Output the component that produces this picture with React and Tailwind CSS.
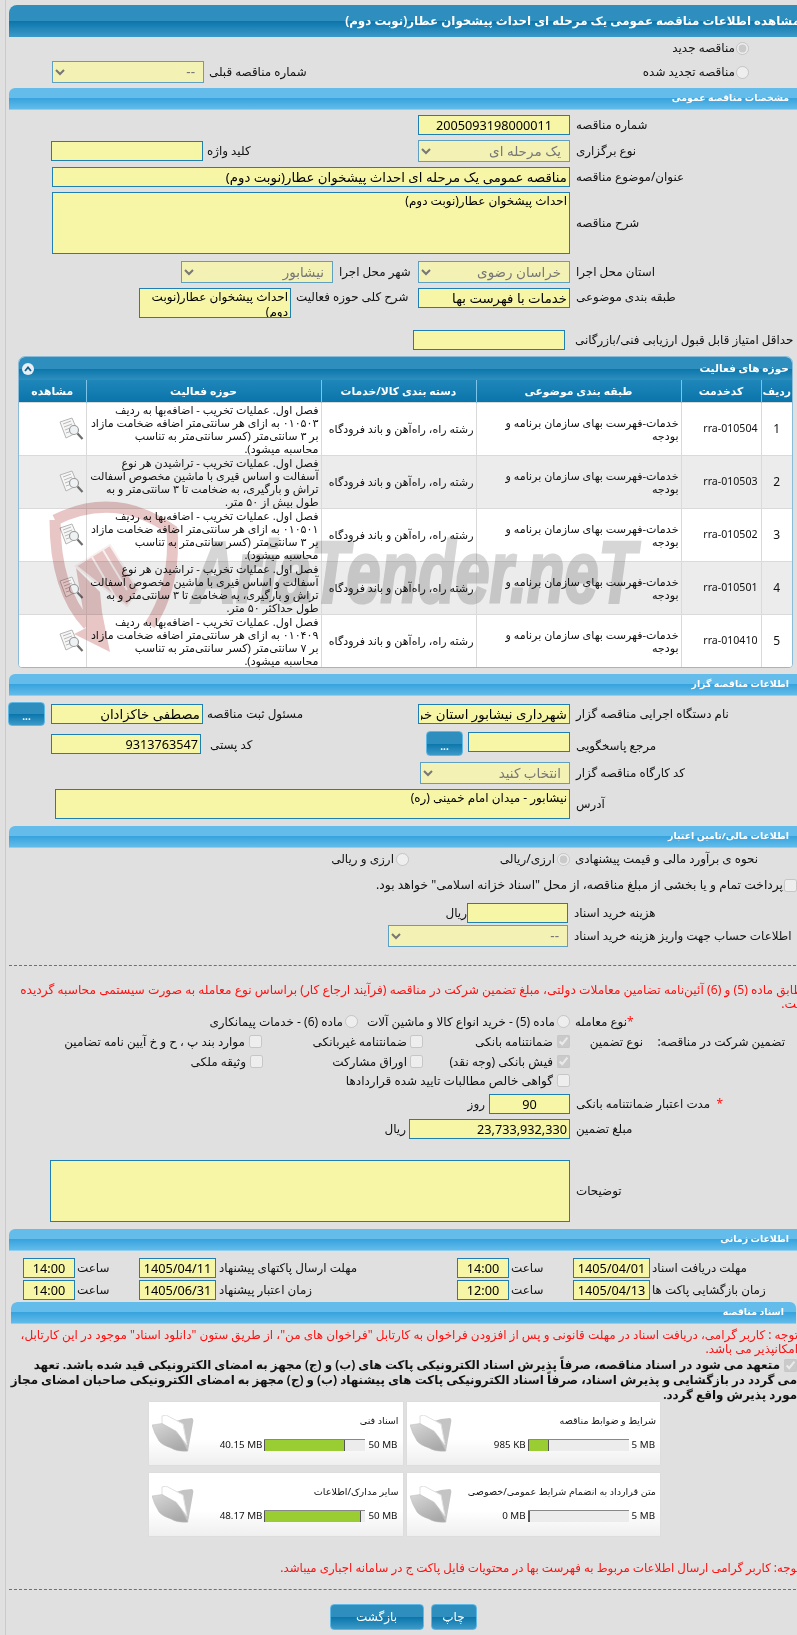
import React from 'react';

const font = "[font-family:'Noto_Sans','DejaVu_Sans',sans-serif]";
const inputCls = 'block h-[20px] border border-[#1f7fb3] bg-[#f7f6a6] px-0.5 text-black outline-none';
const areaCls = 'block resize-none overflow-hidden border border-[#1f7fb3] bg-[#f7f6a6] px-0.5 text-[12px] leading-[15px] text-black outline-none';
const selectCls = 'block h-[22px] border border-[#5f9fbf] bg-[#f3f1b4] px-1 text-[13.5px] text-[#777]';
const darkGrad = 'bg-[linear-gradient(#2e8fbe_0%,#2e8fbe_50%,#0a75ab_50%,#3d9ac8_100%)]';

const Sub = ({ title }) => (
  <div className="flex h-[22px] items-center rounded-tl-[6px] border-b border-[#8fd0f0] bg-[linear-gradient(#63bcea_0%,#63bcea_48%,#38a3dd_50%,#63bcea_100%)] pr-[12px] text-[9.4px] font-bold text-white">
    {title}
  </div>
);

const Label = ({ w, pl = 'pl-[6px]', children }) => (
  <div className={`${w} ${pl} shrink-0 text-left text-[11.9px] whitespace-nowrap`}>{children}</div>
);

const Row = ({ cls, children }) => <div className={`flex items-center ${cls}`}>{children}</div>;

const Dots = ({ cls }) => (
  <button className={`flex shrink-0 items-end justify-center rounded-[4px] border border-[#5fb8e6] pb-1 text-[10px] leading-none font-bold text-white ${darkGrad} ${cls}`}>
    ...
  </button>
);

const Radio = ({ checked }) => (
  <input type="radio" disabled defaultChecked={checked} className="m-0 block h-[13px] w-[13px] shrink-0" />
);
const Check = ({ checked }) => (
  <input type="checkbox" disabled defaultChecked={checked} className="m-0 block h-[13px] w-[13px] shrink-0" />
);

const DocIcon = () => (
  <svg width="25" height="24" viewBox="0 0 25 24" className="block">
    <path d="M1 5 L13 1 L19 15 L7 21 Z" fill="#f6f6f6" stroke="#b5b5b5" />
    <path d="M4 7 L12 4 M5 10 L13 7 M6 13 L11 11 M7 16 L10 15" stroke="#b8b8b8" />
    <circle cx="15" cy="13" r="4.5" fill="#eef2f4" stroke="#9a9a9a" strokeWidth="1.2" />
    <path d="M18.5 16.5 L23.5 22" stroke="#6d6d6d" strokeWidth="2.2" />
  </svg>
);

const Folder = () => (
  <svg width="42" height="38" viewBox="0 0 42 38" className="block shrink-0">
    <defs>
      <linearGradient id="flap" x1="0" y1="0" x2="0.6" y2="1">
        <stop offset="0" stopColor="#d8d8d8" />
        <stop offset="1" stopColor="#a9a9a9" />
      </linearGradient>
    </defs>
    <path d="M24 6 L31 4 L40 3 Q42 4 41 8 L36 36 L26 20 Z" fill="#c4c4c4" />
    <path d="M10 1 L14 0 L31 9 L35 30 L24 16 L10 9 Z" fill="#ffffff" stroke="#e0e0e0" />
    <path d="M0 10 L10 8.5 L24 16.5 L29 23 L36 36 Q26 37 19 33 Q10 30 7 26 Q2 18 0 10 Z" fill="url(#flap)" stroke="#bbbbbb" strokeWidth="0.5" />
  </svg>
);

const Card = ({ title, used, max, pct }) => (
  <div className="flex h-[63px] bg-[linear-gradient(#ffffff_0%,#ffffff_60%,#efefef_100%)] shadow-[0_0_1px_#cfcfcf]">
    <div className="min-w-0 flex-1 pt-[12px] pr-[4px]">
      <div className="h-[13px] text-[9.6px] leading-[13px] whitespace-nowrap">{title}</div>
      <div className="mt-[12px] flex items-center pr-px text-[9.8px] leading-[12px]">
        <span className="whitespace-nowrap" dir="ltr">{max}</span>
        <div className="mr-[3px] h-[12px] w-[101px] shrink-0 border-t border-[#888] bg-[#ececec]" dir="ltr">
          <div className="h-full border-r border-l border-[#555] bg-[#9acd32]" style={{ width: `${pct}%` }} />
        </div>
        <span className="mr-[2px] whitespace-nowrap" dir="ltr">{used}</span>
      </div>
    </div>
    <div className="pt-[13px] pl-[3px]"><Folder /></div>
  </div>
);

const addLines = (code, last) => `فصل اول. عملیات تخریب - اضافه‌بها به ردیف\n${code} به ازای هر سانتی‌متر اضافه ضخامت مازاد\nبر ${last} سانتی‌متر (کسر سانتی‌متر به تناسب\nمحاسبه میشود).`;
const cutLines = (tail) => `فصل اول. عملیات تخریب - تراشیدن هر نوع\nآسفالت و اساس قیری با ماشین مخصوص آسفالت\nتراش و بارگیری، به ضخامت تا ۳ سانتی‌متر و به\n${tail}`;

const activity = [
  ['1', 'rra-010504', addLines('۰۱۰۵۰۳', '۳')],
  ['2', 'rra-010503', cutLines('طول بیش از ۵۰ متر.')],
  ['3', 'rra-010502', addLines('۰۱۰۵۰۱', '۳')],
  ['4', 'rra-010501', cutLines('طول حداکثر ۵۰ متر.')],
  ['5', 'rra-010410', addLines('۰۱۰۴۰۹', '۷')],
];

const ActivityPanel = () => (
  <div className="mt-[6px] mr-[8px] ml-[9px] overflow-hidden rounded-t-[7px] rounded-b-[4px] border border-[#8bbbd6] bg-white">
    <div className="flex h-[23px] items-center justify-between bg-[linear-gradient(#2e8fbe_0%,#2e8fbe_50%,#0a75ab_50%,#2e8fbe_100%)] pr-[3px] pl-[3px] text-[10.6px] font-bold text-white">
      <span>حوزه های فعالیت</span>
      <span className="flex h-[12px] w-[12px] items-center justify-center rounded-full bg-[#e8eef4]">
        <svg width="8" height="6" viewBox="0 0 8 6"><path d="M1 5 L4 1.5 L7 5" fill="none" stroke="#14608c" strokeWidth="1.8" /></svg>
      </span>
    </div>
    <table className="w-full table-fixed border-collapse text-[11.1px] leading-[13px]">
      <thead>
        <tr className="h-[22px] bg-[linear-gradient(#1f86b9_0%,#0a75ab_100%)] text-[10.8px] font-bold text-white">
          <th className="w-[31px] border-l border-[#7cc4e8] font-bold">ردیف</th>
          <th className="w-[80px] border-l border-[#7cc4e8] font-bold">کدخدمت</th>
          <th className="w-[205px] border-l border-[#7cc4e8] font-bold">طبقه بندی موضوعی</th>
          <th className="w-[155px] border-l border-[#7cc4e8] font-bold">دسته بندی کالا/خدمات</th>
          <th className="w-[235px] border-l border-[#7cc4e8] font-bold">حوزه فعالیت</th>
          <th className="font-bold">مشاهده</th>
        </tr>
      </thead>
      <tbody>
        {activity.map((r, i) => (
          <tr key={r[0]} className={`h-[53px] border-t border-[#dadada] ${i % 2 ? 'bg-[#ececec]' : 'bg-white'}`}>
            <td className="border-l border-[#dadada] text-center text-[12px]">{r[0]}</td>
            <td className="border-l border-[#dadada] px-[3px] text-right text-[10.6px]" dir="ltr">{r[1]}</td>
            <td className="border-l border-[#dadada] px-[2px]">خدمات-فهرست بهای سازمان برنامه و بودجه</td>
            <td className="border-l border-[#dadada] px-[2px] whitespace-nowrap">رشته راه، راه‌آهن و باند فرودگاه</td>
            <td className="border-l border-[#dadada] px-[2px] whitespace-pre-line">{r[2]}</td>
            <td className="pr-[2px]"><DocIcon /></td>
          </tr>
        ))}
      </tbody>
    </table>
  </div>
);

const Watermark = () => (
  <svg width="797" height="1635" viewBox="0 0 797 1635" dir="ltr" className="pointer-events-none absolute top-0 left-0 mix-blend-multiply">
    <path d="M55 520 Q115 490 172 530 Q176 585 150 625" fill="none" stroke="#e8c6c6" strokeWidth="11" />
    <path d="M55 520 Q55 590 88 625" fill="none" stroke="#e8c6c6" strokeWidth="11" />
    <path d="M76 566 L110 545 L138 590 L127 606 Z M92 557 L116 598 M103 550 L127 590" fill="#e8c6c6" stroke="#f8f0f0" strokeWidth="2" />
    <path d="M102 612 L110 652 L74 634 L86 628 L76 568 L100 592 Z" fill="#e8c6c6" />
    <text x="192" y="602" textLength="444" lengthAdjust="spacingAndGlyphs" fill="#d6d6d6" stroke="#d6d6d6" strokeWidth="3" fontSize="88" fontWeight="700" fontFamily="'Liberation Sans', sans-serif" fontStyle="italic">AriaTender.neT</text>
  </svg>
);

export default function App() {
  return (
    <div className={`relative h-[1635px] w-[797px] overflow-hidden bg-[#e0e0e0] text-[#111] ${font}`} dir="ltr">
      <div className="ml-[5px] h-full w-[796px] border-l border-[#cacaca] pt-[5px] pl-[3px]" dir="rtl">
        <div className={`flex h-[32px] items-center rounded-tl-[8px] text-[11.85px] font-bold whitespace-nowrap text-white ${darkGrad}`}>
          <span className="mr-px">مشاهده اطلاعات مناقصه عمومی یک مرحله ای احداث پیشخوان عطار(نوبت دوم)</span>
        </div>

        <Row cls="mt-[3px] h-[16px] pr-[52px] text-[12px]">
          <Radio checked />
          <span className="mr-[1px]">مناقصه جدید</span>
        </Row>
        <Row cls="mt-[5px] h-[22px]">
          <div className="flex w-[439px] items-center pr-[52px] text-[12px]">
            <Radio />
            <span className="mr-[1px]">مناقصه تجدید شده</span>
          </div>
          <Label w="w-[158px]" pl="pl-[5px]">شماره مناقصه قبلی</Label>
          <select defaultValue="--" className={`${selectCls} w-[152px] text-[#222]`}><option>--</option></select>
        </Row>

        <div className="mt-[5px]"><Sub title="مشخصات مناقصه عمومی" /></div>

        <Row cls="mt-[5px] h-[20px]">
          <Label w="w-[231px]">شماره مناقصه</Label>
          <input readOnly defaultValue="2005093198000011" className={`${inputCls} w-[152px] text-center text-[12.7px]`} />
        </Row>
        <Row cls="mt-[5px] h-[22px]">
          <Label w="w-[231px]">نوع برگزاری</Label>
          <select defaultValue="a" className={`${selectCls} w-[152px]`}><option value="a">یک مرحله ای</option></select>
          <Label w="w-[215px]" pl="pl-[4px]">کلید واژه</Label>
          <input readOnly className={`${inputCls} w-[152px]`} />
        </Row>
        <Row cls="mt-[5px] h-[20px]">
          <Label w="w-[231px]">عنوان/موضوع مناقصه</Label>
          <input readOnly defaultValue="مناقصه عمومی یک مرحله ای احداث پیشخوان عطار(نوبت دوم)" className={`${inputCls} w-[518px] text-[13.3px]`} />
        </Row>
        <Row cls="mt-[5px] h-[62px]">
          <Label w="w-[231px]">شرح مناقصه</Label>
          <textarea readOnly defaultValue="احداث پیشخوان عطار(نوبت دوم)" className={`${areaCls} h-[62px] w-[518px]`} />
        </Row>
        <Row cls="mt-[7px] h-[22px]">
          <Label w="w-[231px]">استان محل اجرا</Label>
          <select defaultValue="a" className={`${selectCls} w-[152px]`}><option value="a">خراسان رضوی</option></select>
          <Label w="w-[85px]">شهر محل اجرا</Label>
          <select defaultValue="a" className={`${selectCls} w-[152px]`}><option value="a">نیشابور</option></select>
        </Row>
        <div className="mt-[5px] flex h-[30px] items-start">
          <Label w="w-[231px]">طبقه بندی موضوعی</Label>
          <input readOnly defaultValue="خدمات با فهرست بها" className={`${inputCls} w-[152px] text-[13.3px]`} />
          <Label w="w-[127px]" pl="pl-[5px]">شرح کلی حوزه فعالیت</Label>
          <textarea readOnly defaultValue="احداث پیشخوان عطار(نوبت دوم)" className={`${areaCls} h-[30px] w-[152px]`} />
        </div>
        <Row cls="mt-[12px] h-[20px]">
          <Label w="w-[236px]" pl="pl-[10px]">حداقل امتیاز قابل قبول ارزیابی فنی/بازرگانی</Label>
          <input readOnly className={`${inputCls} w-[152px]`} />
        </Row>

        <ActivityPanel />

        <div className="mt-[6px]"><Sub title="اطلاعات مناقصه گزار" /></div>

        <Row cls="mt-[8px] h-[20px]">
          <Label w="w-[231px]">نام دستگاه اجرایی مناقصه گزار</Label>
          <input readOnly defaultValue="شهرداری نیشابور استان خراسان رضوی" className={`${inputCls} w-[152px] text-[13.3px]`} />
          <Label w="w-[215px]" pl="pl-[4px]">مسئول ثبت مناقصه</Label>
          <input readOnly defaultValue="مصطفی خاکزادان" className={`${inputCls} w-[152px] text-[13.3px]`} />
          <Dots cls="mr-[6px] h-[24px] w-[37px]" />
        </Row>
        <div className="mt-[8px] flex h-[22px] items-start">
          <Label w="w-[231px]" pl="pl-[6px] mt-[5px]">مرجع پاسخگویی</Label>
          <input readOnly className={`${inputCls} w-[102px]`} />
          <Dots cls="mr-[5px] -mt-[1px] h-[25px] w-[37px]" />
          <Label w="w-[225px]" pl="pl-[9px] mt-[4px]">کد پستی</Label>
          <input readOnly defaultValue="9313763547" className={`${inputCls} mt-[2px] w-[150px] text-[12.7px]`} />
        </div>
        <Row cls="mt-[8px] h-[22px]">
          <Label w="w-[231px]">کد کارگاه مناقصه گزار</Label>
          <select defaultValue="a" className={`${selectCls} w-[150px]`}><option value="a">انتخاب کنید</option></select>
        </Row>
        <Row cls="mt-[5px] h-[30px]">
          <Label w="w-[231px]">آدرس</Label>
          <textarea readOnly defaultValue="نیشابور - میدان امام خمینی (ره)" className={`${areaCls} h-[30px] w-[515px]`} />
        </Row>

        <div className="mt-[7px]"><Sub title="اطلاعات مالی/تامین اعتبار" /></div>

        <Row cls="mt-[3px] h-[16px] text-[12px]">
          <Label w="w-[231px]" pl="pl-[5px]">نحوه ی برآورد مالی و قیمت پیشنهادی</Label>
          <Radio checked />
          <span className="mr-[2px] w-[146px]">ارزی/ریالی</span>
          <Radio />
          <span className="mr-[2px]">ارزی و ریالی</span>
        </Row>
        <Row cls="mt-[10px] h-[16px] pr-[4px] text-[12.3px]">
          <Check />
          <span className="mr-[1px] whitespace-nowrap">پرداخت تمام و یا بخشی از مبلغ مناقصه، از محل "اسناد خزانه اسلامی" خواهد بود.</span>
        </Row>
        <Row cls="mt-[10px] h-[20px]">
          <Label w="w-[233px]">هزینه خرید اسناد</Label>
          <input readOnly className={`${inputCls} w-[101px]`} />
          <span className="text-[12px]">ریال</span>
        </Row>
        <Row cls="mt-[2px] h-[22px]">
          <Label w="w-[233px]">اطلاعات حساب جهت واریز هزینه خرید اسناد</Label>
          <select defaultValue="--" className={`${selectCls} w-[180px] text-[#222]`}><option>--</option></select>
        </Row>

        <div className="mt-[18px] h-px border-t border-dashed border-[#2a86b8]" />

        <div className="mt-[17px] -mr-[9px] ml-[9px] text-[12.2px] leading-[14.3px] text-[#ff1010]">
          مطابق ماده (5) و (6) آئین‌نامه تضامین معاملات دولتی، مبلغ تضمین شرکت در مناقصه (فرآیند ارجاع کار) براساس نوع معامله به صورت سیستمی محاسبه گردیده است.
        </div>

        <Row cls="mt-[2px] h-[16px] text-[12px] whitespace-nowrap">
          <Label w="w-[231px]" pl="pl-[5px]"><span className="text-[#ff1010]">*</span>نوع معامله</Label>
          <Radio />
          <span className="mr-[2px] w-[197px]">ماده (5) - خرید انواع کالا و ماشین آلات</span>
          <Radio />
          <span className="mr-[2px]">ماده (6) - خدمات پیمانکاری</span>
        </Row>
        <Row cls="mt-[4px] h-[16px] text-[12px] whitespace-nowrap">
          <div className="flex w-[231px] shrink-0 pr-[16px]">
            <span className="w-[142px]">تضمین شرکت در مناقصه:</span>
            <span>نوع تضمین</span>
          </div>
          <Check checked />
          <span className="mr-[4px] w-[130px]">ضمانتنامه بانکی</span>
          <Check />
          <span className="mr-[3px] w-[145px]">ضمانتنامه غیربانکی</span>
          <Check />
          <span className="mr-[4px]">موارد بند پ ، ح و خ آیین نامه تضامین</span>
        </Row>
        <Row cls="mt-[4px] h-[16px] text-[12px] whitespace-nowrap">
          <div className="w-[231px] shrink-0" />
          <Check checked />
          <span className="mr-[4px] w-[130px]">فیش بانکی (وجه نقد)</span>
          <Check />
          <span className="mr-[3px] w-[144px]">اوراق مشارکت</span>
          <Check />
          <span className="mr-[4px]">وثیقه ملکی</span>
        </Row>
        <Row cls="mt-[3px] h-[16px] text-[12px] whitespace-nowrap">
          <div className="w-[231px] shrink-0" />
          <Check />
          <span className="mr-[4px]">گواهی خالص مطالبات تایید شده قراردادها</span>
        </Row>
        <Row cls="mt-[5px] h-[20px]">
          <Label w="w-[231px]"><span className="text-[#ff1010]">*</span>&nbsp;&nbsp;مدت اعتبار ضمانتنامه بانکی</Label>
          <input readOnly defaultValue="90" className={`${inputCls} w-[81px] text-center text-[12.7px]`} />
          <span className="mr-[4px] text-[12px]">روز</span>
        </Row>
        <Row cls="mt-[5px] h-[20px]">
          <Label w="w-[231px]">مبلغ تضمین</Label>
          <input readOnly defaultValue="23,733,932,330" className={`${inputCls} w-[161px] text-[12.7px]`} />
          <span className="mr-[3px] text-[12px]">ریال</span>
        </Row>
        <Row cls="mt-[21px] h-[62px]">
          <Label w="w-[231px]">توضیحات</Label>
          <textarea readOnly className={`${areaCls} h-[62px] w-[520px]`} />
        </Row>

        <div className="mt-[7px]"><Sub title="اطلاعات زمانی" /></div>

        {[
          ['مهلت دریافت اسناد', '1405/04/01', '14:00', 'مهلت ارسال پاکتهای پیشنهاد', '1405/04/11', '14:00'],
          ['زمان بازگشایی پاکت ها', '1405/04/13', '12:00', 'زمان اعتبار پیشنهاد', '1405/06/31', '14:00'],
        ].map((r, i) => (
          <Row key={r[0]} cls={`h-[20px] ${i ? 'mt-[2px]' : 'mt-[7px]'}`}>
            <Label w="w-[151px]" pl="pl-[2px]">{r[0]}</Label>
            <input readOnly defaultValue={r[1]} className={`${inputCls} w-[77px] text-center text-[12.7px]`} />
            <Label w="w-[64px]" pl="pl-[2px]">ساعت</Label>
            <input readOnly defaultValue={r[2]} className={`${inputCls} w-[52px] text-center text-[12.7px]`} />
            <Label w="w-[241px]" pl="pl-[3px]">{r[3]}</Label>
            <input readOnly defaultValue={r[4]} className={`${inputCls} w-[77px] text-center text-[12.7px]`} />
            <Label w="w-[64px]" pl="pl-[2px]">ساعت</Label>
            <input readOnly defaultValue={r[5]} className={`${inputCls} w-[52px] text-center text-[12.7px]`} />
          </Row>
        ))}

        <div className="mt-[2px] mr-[5px] ml-[2px] overflow-hidden rounded-t-[6px]">
          <Sub title="اسناد مناقصه" />
        </div>

        <div className="mt-[4px] mr-[3px] ml-[6px] text-[12px] leading-[14px] text-[#ff1010]">
          توجه : کاربر گرامی، دریافت اسناد در مهلت قانونی و پس از افزودن فراخوان به کارتابل "فراخوان های من"، از طریق ستون "دانلود اسناد" موجود در این کارتابل، امکانپذیر می باشد.
        </div>
        <div className="mt-px mr-[4px] ml-[-4px] text-[11.9px] leading-[15px] font-bold">
          <span className="ml-[4px] inline-block align-middle"><Check checked /></span>
          متعهد می شود در اسناد مناقصه، صرفاً پذیرش اسناد الکترونیکی پاکت های (ب) و (ج) مجهز به امضای الکترونیکی قید شده باشد. تعهد
          <br />
          می گردد در بازگشایی و پذیرش اسناد، صرفاً اسناد الکترونیکی پاکت های پیشنهاد (ب) و (ج) مجهز به امضای الکترونیکی صاحبان امضای مجاز
          <br />
          مورد پذیرش واقع گردد.
        </div>

        <div className="mr-[141px] grid w-[511px] grid-cols-2 gap-x-[4px] gap-y-[8px]">
          <Card title="شرایط و ضوابط مناقصه" used="985 KB" max="5 MB" pct={21} />
          <Card title="اسناد فنی" used="40.15 MB" max="50 MB" pct={80} />
          <Card title="متن قرارداد به انضمام شرایط عمومی/خصوصی" used="0 MB" max="5 MB" pct={0} />
          <Card title="سایر مدارک/اطلاعات" used="48.17 MB" max="50 MB" pct={96} />
        </div>

        <div className="mt-[24px] mr-px text-[11.8px] leading-[14px] whitespace-nowrap text-[#ff1010]">
          توجه: کاربر گرامی ارسال اطلاعات مربوط به فهرست بها در محتویات فایل پاکت ج در سامانه اجباری میباشد.
        </div>

        <div className="mt-[15px] h-px border-t border-dashed border-[#2a86b8]" />

        <div className="mt-[14px] mr-[4px] flex justify-center gap-[7px]">
          <button className={`h-[26px] w-[46px] rounded-[4px] border border-[#5fb8e6] text-[12px] text-white ${darkGrad}`}>چاپ</button>
          <button className={`h-[26px] w-[94px] rounded-[4px] border border-[#5fb8e6] text-[12px] text-white ${darkGrad}`}>بازگشت</button>
        </div>
      </div>
      <Watermark />
    </div>
  );
}
